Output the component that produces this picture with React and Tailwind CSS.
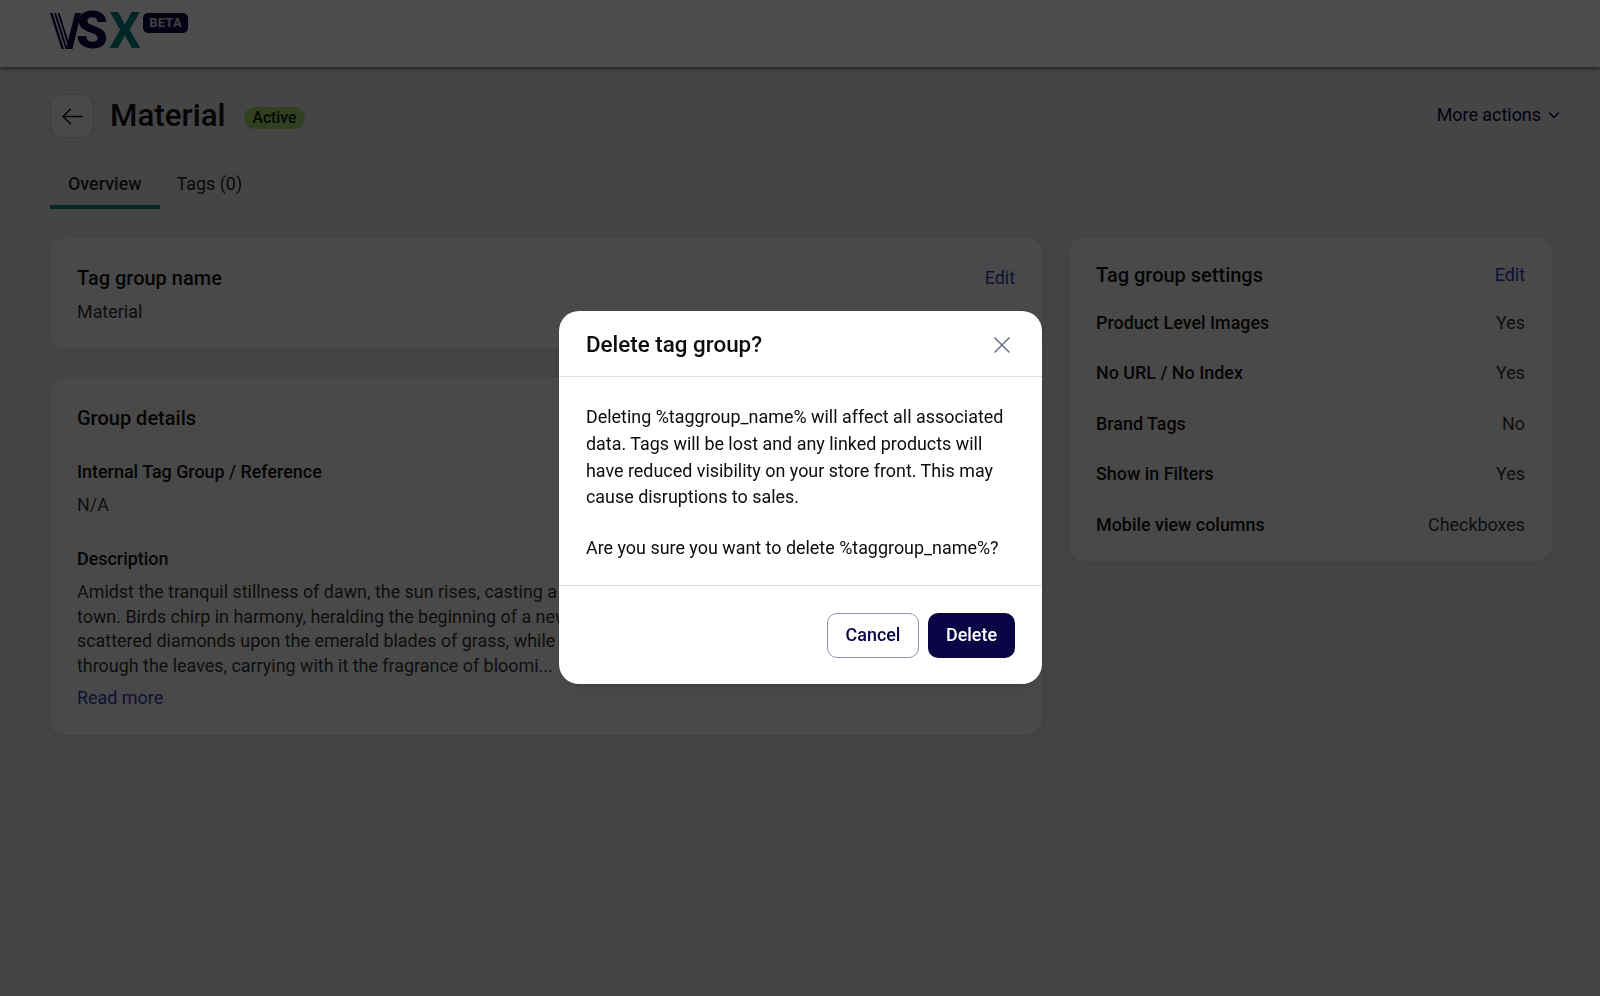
const DetailRow = ({ label, value }) => (
  <div className="flex items-center justify-between h-[50.5px] text-[17.92px]">
    <span className="font-medium">{label}</span>
    <span className="text-[#333]">{value}</span>
  </div>
)

const Logo = () => (
  <div className="flex items-start">
    <div className="relative h-9 w-[92px] mt-[13px]">
      <svg width="40" height="36" viewBox="0 0 40 36" className="absolute left-0 top-0">
        <path d="M0 0h2.5L14 36h-2.5z M4 0h2l11.5 36h-2z M7.5 0h2L21 36h-2z" fill="#0a0545" />
        <path d="M25 0h6L22.5 36H16z" fill="#0a0545" />
      </svg>
      <span className="absolute left-[26px] top-[-8px] text-[51px] leading-[52px] font-black text-[#0a0545]">S</span>
      <span className="absolute left-[59px] top-[-8px] text-[50px] leading-[52px] font-bold text-[#007f88]">X</span>
    </div>
    <span className="mt-[13px] ml-[1px] bg-[#0a0545] text-[#d6d6e0] rounded-[5px] h-5 w-[45px] flex items-center justify-center text-[13px] font-bold tracking-[0.2px]">BETA</span>
  </div>
)

const Card = ({ className = "", children }) => (
  <div className={`bg-[#f6f6f6] rounded-2xl shadow-[0_2px_8px_rgba(0,0,0,0.08)] ${className}`}>{children}</div>
)

export default function App() {
  return (
    <div className="relative min-h-screen bg-[#e6e6e6] text-[#111] font-['Roboto',sans-serif]">
      <header className="h-[67px] bg-white px-[50px] shadow-[0_2px_4px_rgba(0,0,0,0.5)]">
        <Logo />
      </header>

      <div className="flex items-center justify-between pl-[50px] pr-[40px] pt-[27px]">
        <div className="flex items-center">
          <button className="w-11 h-11 rounded-xl border border-[#ccc] bg-[#f4f4f4] flex items-center justify-center">
            <svg width="25" height="25" viewBox="0 0 24 24" fill="none" stroke="#111" strokeWidth="1.5" strokeLinecap="round" strokeLinejoin="round">
              <path d="M21 12H3M10 5l-7 7 7 7" />
            </svg>
          </button>
          <h1 className="ml-4 text-[31.36px] leading-[44px] font-medium">Material</h1>
          <span className="ml-[18px] mt-[3px] h-[22px] px-[9px] rounded-full bg-[#a5d86b] text-[15.68px] font-medium flex items-center">Active</span>
        </div>
        <div className="flex items-center text-[17.92px] text-[#0a0545] gap-[7px] mb-[2px]">
          More actions
          <svg width="12" height="12" viewBox="0 0 12 12" fill="none" stroke="#0a0545" strokeWidth="1.4" strokeLinecap="round" strokeLinejoin="round">
            <path d="M1.5 4l4.5 4.5L10.5 4" />
          </svg>
        </div>
      </div>

      <div className="mt-[27px] h-[44px] border-b border-[#d8d8d8] px-[50px] flex text-[17.92px]">
        <div className="px-[18px] pt-[6px] h-[44px] border-b-4 border-[#007f88] font-medium text-[#222]">Overview</div>
        <div className="pl-[17px] pt-[6px] text-[#222]">Tags (0)</div>
      </div>

      <main className="pr-[48px] pl-[50px] pt-[28px] grid grid-cols-[992px_483px] gap-[27px]">
        <div className="flex flex-col gap-[28px]">
          <Card className="h-[112px] px-[27px] pt-[27px]">
            <div className="flex justify-between items-center">
              <h2 className="text-[20px] leading-[28px] font-medium">Tag group name</h2>
              <a className="text-[17.92px] text-[#3039b5]">Edit</a>
            </div>
            <p className="mt-[7px] text-[17.92px] leading-[26px] text-[#333]">Material</p>
          </Card>
          <Card className="h-[358px] px-[27px] pt-[27px]">
            <h2 className="text-[20px] leading-[28px] font-medium">Group details</h2>
            <h3 className="mt-[27px] text-[17.92px] leading-[26px] font-medium">Internal Tag Group / Reference</h3>
            <p className="mt-[7px] text-[17.92px] leading-[26px] text-[#333]">N/A</p>
            <h3 className="mt-[28px] text-[17.92px] leading-[26px] font-medium">Description</h3>
            <p className="mt-[8px] text-[17.92px] leading-[24.5px] text-[#333] whitespace-nowrap">
              Amidst the tranquil stillness of dawn, the sun rises, casting a golden glow over the sleepy<br />
              town. Birds chirp in harmony, heralding the beginning of a new day. Dew drops glisten like<br />
              scattered diamonds upon the emerald blades of grass, while a gentle breeze whispers<br />
              through the leaves, carrying with it the fragrance of bloomi...
            </p>
            <a className="block mt-[7px] text-[17.92px] leading-[26px] text-[#3039b5]">Read more</a>
          </Card>
        </div>
        <Card className="h-[324px] px-[27px] pt-[24px] self-start">
          <div className="flex justify-between items-center mb-[9px]">
            <h2 className="text-[20px] leading-[28px] font-medium">Tag group settings</h2>
            <a className="text-[17.92px] text-[#3039b5]">Edit</a>
          </div>
          <DetailRow label="Product Level Images" value="Yes" />
          <DetailRow label="No URL / No Index" value="Yes" />
          <DetailRow label="Brand Tags" value="No" />
          <DetailRow label="Show in Filters" value="Yes" />
          <DetailRow label="Mobile view columns" value="Checkboxes" />
        </Card>
      </main>

      <div className="fixed inset-0 bg-black/70 flex items-center justify-center pl-[1px] pb-[1px]">
        <div className="w-[483px] h-[373px] bg-white rounded-[20px] shadow-lg flex flex-col text-[#0c0c0c]">
          <div className="h-[66px] px-[27px] border-b border-[#dcdde3] flex items-center justify-between shrink-0">
            <h2 className="text-[22.4px] font-medium mt-[2px]">Delete tag group?</h2>
            <svg width="18" height="18" viewBox="0 0 18 18" fill="none" stroke="#66708c" strokeWidth="1.5" className="mr-[4px] mt-[2px]">
              <path d="M1.5 1.5l15 15M16.5 1.5l-15 15" />
            </svg>
          </div>
          <div className="flex-1 px-[27px] pt-[27px] text-[17.92px] leading-[26.8px]">
            <p>Deleting %taggroup_name% will affect all associated data. Tags will be lost and any linked products will have reduced visibility on your store front. This may cause disruptions to sales.</p>
            <p className="mt-[24px]">Are you sure you want to delete %taggroup_name%?</p>
          </div>
          <div className="h-[99px] shrink-0 border-t border-[#dcdde3] px-[27px] flex items-center justify-end gap-[9px]">
            <button className="w-[92px] h-[45px] rounded-[10px] border-[1.5px] border-[#8f94b3] bg-white text-[17.92px] font-medium text-[#0a0545]">Cancel</button>
            <button className="w-[87px] h-[45px] rounded-[10px] bg-[#0a0545] text-[17.92px] font-medium text-white">Delete</button>
          </div>
        </div>
      </div>
    </div>
  )
}
